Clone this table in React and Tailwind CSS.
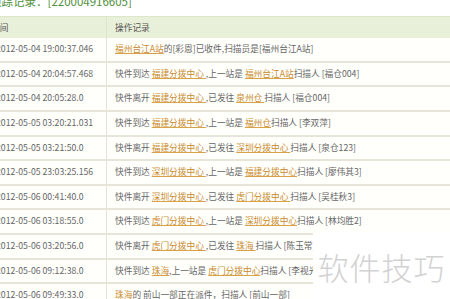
import React from "react";

const L = ({ children }) => (
  <span className="text-[#c98a2c] underline decoration-[#d9a24a] underline-offset-[1px]">{children}</span>
);

const rows = [
  ["2012-05-04 19:00:37.046", <><L>福州台江A站</L>的[彩恩]已收件,扫描员是[福州台江A站]</>],
  ["2012-05-04 20:04:57.468", <>快件到达 <L>福建分拨中心 </L>,上一站是 <L>福州台江A站</L>扫描人 [福仓004]</>],
  ["2012-05-04 20:05:28.0", <>快件离开 <L>福建分拨中心 </L>,已发往 <L>泉州仓 </L>扫描人 [福仓004]</>],
  ["2012-05-05 03:20:21.031", <>快件到达 <L>福建分拨中心 </L>,上一站是 <L>福州仓</L>扫描人 [李双萍]</>],
  ["2012-05-05 03:21:50.0", <>快件离开 <L>福建分拨中心 </L>,已发往 <L>深圳分拨中心 </L>扫描人 [泉仓123]</>],
  ["2012-05-05 23:03:25.156", <>快件到达 <L>深圳分拨中心 </L>,上一站是 <L>福建分拨中心</L>扫描人 [廖伟其3]</>],
  ["2012-05-06 00:41:40.0", <>快件离开 <L>深圳分拨中心 </L>,已发往 <L>虎门分拨中心 </L>扫描人 [吴桂秋3]</>],
  ["2012-05-06 03:18:55.0", <>快件到达 <L>虎门分拨中心 </L>,上一站是 <L>深圳分拨中心</L>扫描人 [林均胜2]</>],
  ["2012-05-06 03:20:56.0", <>快件离开 <L>虎门分拨中心 </L>,已发往 <L>珠海 </L>扫描人 [陈玉常]</>],
  ["2012-05-06 09:12:38.0", <>快件到达 <L>珠海</L>,上一站是 <L>虎门分拨中心</L>扫描人 [李视光]</>],
  ["2012-05-06 09:49:33.0", <><L>珠海</L>的 前山一部正在派件，扫描人 [前山一部]</>],
];

export default function App() {
  return (
    <div className="relative w-[450px] h-[299px] overflow-hidden bg-white font-['Noto_Sans_CJK_SC','Liberation_Sans',sans-serif]">
      <div className="-ml-[10px] w-[460px]">
        <div className="-mt-[5px] h-[12px] mb-[9px] text-[11.5px] leading-[12px] text-[#4f8f3a] whitespace-nowrap">
          跟踪记录：[220004916605]
        </div>
        <div className="grid grid-cols-[117px_1fr] h-[22px] bg-[#e9f0d9] border-t border-[#dde6c8] text-[8.7px] leading-[21px] text-[#555]">
          <div className="pl-[1px] border-r border-[#dfe4cf]">时间</div>
          <div className="pl-[8px]">操作记录</div>
        </div>
        {rows.map(([t, c], i) => (
          <div
            key={i}
            className="grid grid-cols-[117px_1fr] h-[24.65px] bg-[#fffffc] border-b-2 border-[#e7e5d9] text-[8.7px] leading-[22.6px] text-[#666] whitespace-nowrap"
          >
            <div className="pl-[6px] border-r border-[#e4e2d6]">{t}</div>
            <div className="pl-[8px] overflow-hidden">{c}</div>
          </div>
        ))}
      </div>
      <div className="absolute left-[313px] top-[233px] w-[137px] h-[66px] bg-white flex items-center justify-center">
        <span className="text-[31px] leading-none text-[#d2d2d2] font-light tracking-[1px]">软件技巧</span>
      </div>
    </div>
  );
}
